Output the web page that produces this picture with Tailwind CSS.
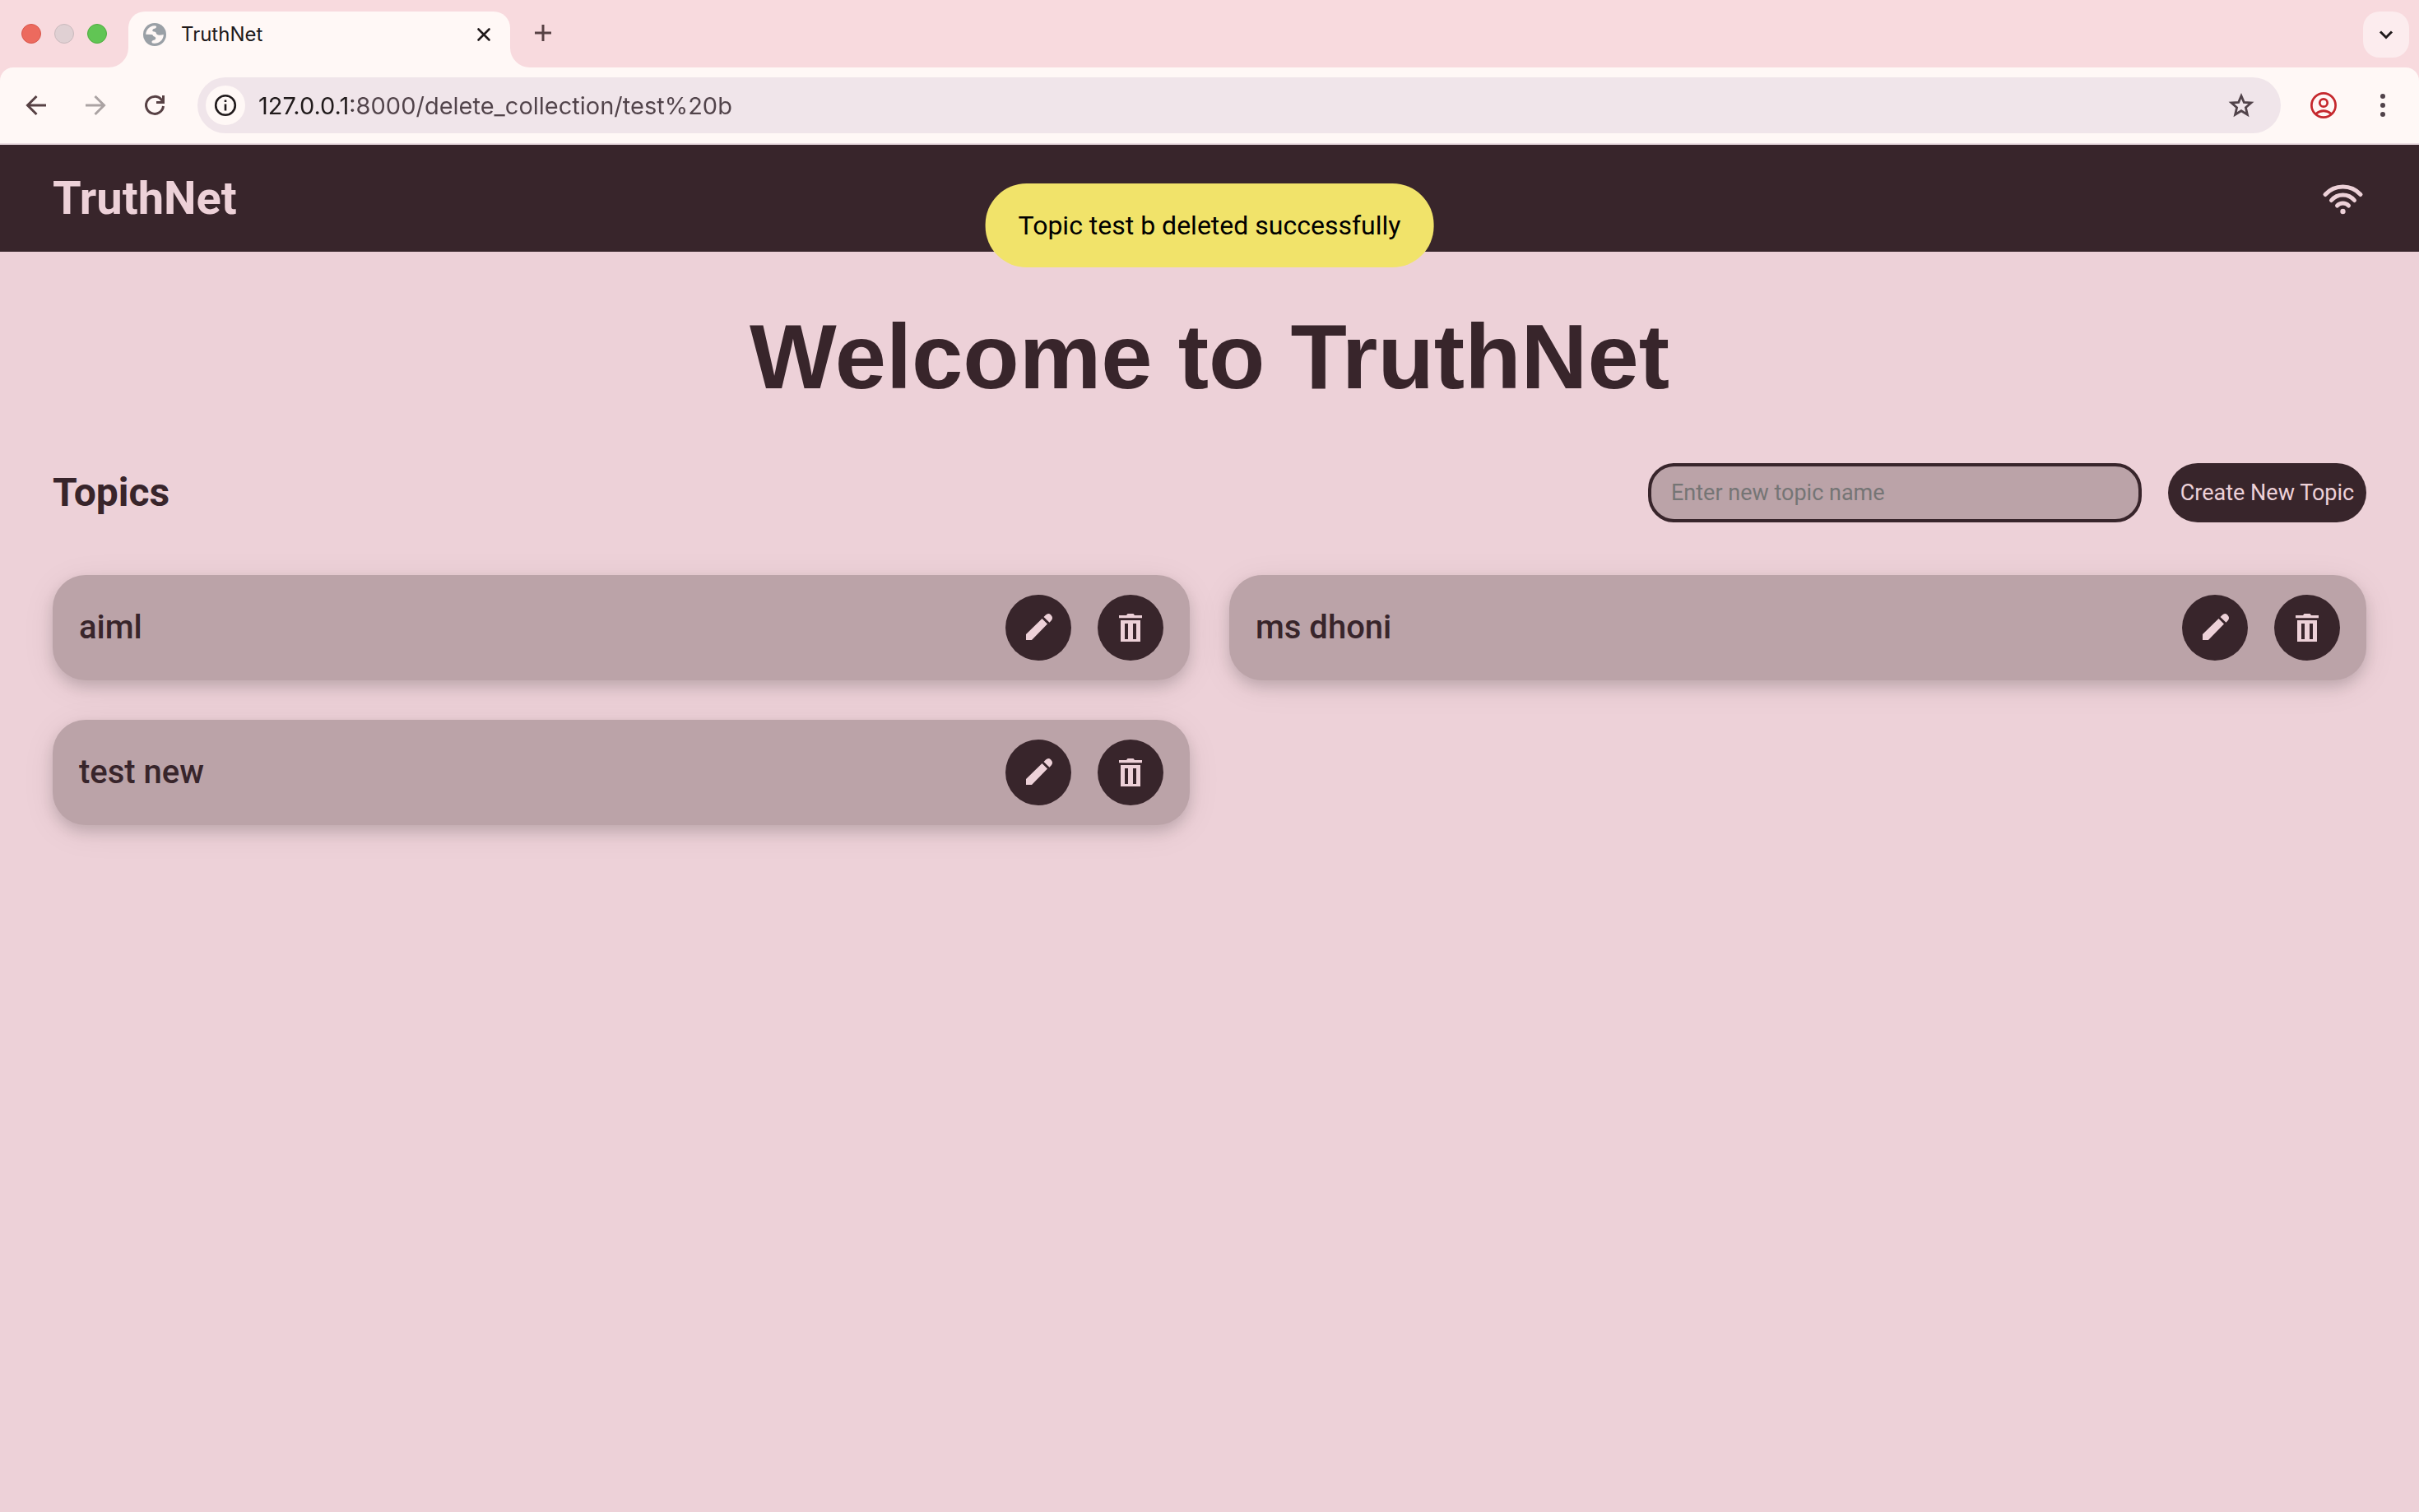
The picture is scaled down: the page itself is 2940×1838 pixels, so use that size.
<!DOCTYPE html>
<html lang="en">
<head>
<meta charset="utf-8">
<title>TruthNet</title>
<script src="https://cdn.jsdelivr.net/npm/@tailwindcss/browser@4"></script>
</head>
<body class="flex min-h-screen flex-col bg-[#edd1d8] font-['Roboto',sans-serif] text-[#38252b]">

<svg class="hidden" aria-hidden="true">
  <symbol id="pencil" viewBox="0 0 48 48">
    <path d="M9 39V32L28.500 13 35 19.500 16 39ZM30.500 11 33 8.500Q36 5.500 39 8.200 42.500 11.500 40 15L37.500 17.700Z"/>
  </symbol>
  <symbol id="trash" viewBox="0 0 48 48">
    <path fill-rule="evenodd" d="M10 9H19L20.500 7H27.500L29 9H38V12.300H10ZM12 15H36V41H12ZM17 19V38H21V19ZM27 19V38H31V19Z"/>
  </symbol>
</svg>

<div class="bg-[#f8dade] font-['Inter',sans-serif]">
  <div class="flex h-[82px] items-end">
    <div class="flex h-[82px] w-[132px] shrink-0 items-center gap-4 pl-[26px]">
      <button aria-label="Close window" class="size-6 rounded-full border border-[#d8574c] bg-[#ec6a5e]"></button>
      <button aria-label="Minimize window" class="size-6 rounded-full border border-[#c9babd] bg-[#e0d0d3]"></button>
      <button aria-label="Zoom window" class="size-6 rounded-full border border-[#50ad40] bg-[#61c554]"></button>
    </div>
    <svg class="size-6 shrink-0 text-[#fff8f6]" viewBox="0 0 24 24" fill="currentColor"><path d="M24 0V24H0A24 24 0 0 0 24 0Z"/></svg>
    <div class="flex h-[68px] w-[464px] items-start rounded-t-[20px] bg-[#fff8f6] pr-[20px] pl-[18px]">
      <div class="flex h-14 w-full items-center">
        <svg class="size-7" viewBox="0 0 28 28">
          <circle cx="14" cy="14" r="14" fill="#9aa0a6"/>
          <path d="M3.200 13.800C3.500 8 8 3.600 13.500 3.200 16 3.100 16.500 4 15.800 5.500 15 7 13 6.500 11.800 7.800 10.500 9.500 11.500 10.500 13.500 10.600 16 10.700 15.500 13 17 14 19 15.200 22 14.500 24.800 14 24.800 20.500 19.500 25 13.500 24.800 11 24.700 10.300 24 10.500 22.500 10.800 21 12.500 21 14 20.500 16 19.500 15.500 17 13.500 16.500 11.500 16 12.500 14.500 10.500 14Z" fill="#fff8f6"/>
        </svg>
        <span class="ml-[18px] flex-1 text-[24px] leading-8 text-[#201a1b]">TruthNet</span>
        <button aria-label="Close tab" class="flex size-6 items-center justify-center">
          <svg class="size-6" viewBox="0 0 24 24" fill="none" stroke="#201a1b" stroke-width="2.600" stroke-linecap="round"><path d="M5.500 5.500 18.500 18.500M18.500 5.500 5.500 18.500"/></svg>
        </button>
      </div>
    </div>
    <svg class="size-6 shrink-0 text-[#fff8f6]" viewBox="0 0 24 24" fill="currentColor"><path d="M0 0V24H24A24 24 0 0 1 0 0Z"/></svg>
    <button aria-label="New tab" class="mb-[30px] ml-1 flex size-6 items-center justify-center">
      <svg class="size-6" viewBox="0 0 24 24" fill="none" stroke="#574144" stroke-width="3"><path d="M12 2V22M2 12H22"/></svg>
    </button>
    <button aria-label="Search tabs" class="mr-3 mb-3 ml-auto flex size-14 items-center justify-center rounded-[20px] bg-[#fcecee]">
      <svg class="size-6" viewBox="0 0 24 24" fill="none" stroke="#201a1b" stroke-width="3"><path d="M5 8.500 12 15.500 19 8.500"/></svg>
    </button>
  </div>

  <div class="flex h-[92px] items-center rounded-t-2xl bg-[#fff8f6] px-7 text-[#574144]">
    <div class="flex w-[212px] shrink-0 gap-10">
      <button aria-label="Back"><svg class="size-8" viewBox="0 0 32 32" fill="none" stroke="currentColor" stroke-width="3"><path d="M28 16H6M16.500 5 5.500 16 16.500 27"/></svg></button>
      <button aria-label="Forward"><svg class="size-8" viewBox="0 0 32 32" fill="none" stroke="#aba3a3" stroke-width="3"><path d="M4 16H26M15.500 5 26.500 16 15.500 27"/></svg></button>
      <button aria-label="Reload"><svg class="size-8" viewBox="0 0 32 32" fill="none" stroke="currentColor" stroke-width="3"><path d="M26.500 17A10.500 10.500 0 1 1 24 9L26.500 12M26.500 4V12.500H18"/></svg></button>
    </div>
    <div class="flex h-[68px] flex-1 items-center rounded-full bg-[#f0e5ea] pr-8 pl-[10px]">
      <button aria-label="Site information" class="flex size-12 items-center justify-center rounded-full bg-[#fff8f6]">
        <svg class="size-7" viewBox="0 0 28 28" fill="none" stroke="#201a1b" stroke-width="2.600"><circle cx="14" cy="14" r="11.800"/><path d="M14 12.500V20.500M14 7.500V10"/></svg>
      </button>
      <input type="text" aria-label="Address" value="127.0.0.1:8000/delete_collection/test%20b" class="ml-4 h-12 flex-1 bg-[linear-gradient(90deg,#201a1b_114px,#51434a_114px)] bg-clip-text text-[29px] text-transparent outline-none">
      <button aria-label="Bookmark this page"><svg class="size-8" viewBox="0 0 32 32" fill="none" stroke="#51434a" stroke-width="2.800"><path d="M16 4.500 19.300 12.300 28 13 21.400 18.700 23.400 27.200 16 22.700 8.600 27.200 10.600 18.700 4 13 12.700 12.300Z"/></svg></button>
    </div>
    <button aria-label="Profile" class="ml-9"><svg class="size-8" viewBox="0 0 32 32" fill="none" stroke="#c5282d" stroke-width="2.700"><circle cx="16" cy="16" r="14.600"/><circle cx="16" cy="13" r="4.700"/><path d="M6.500 26.500Q16 19 25.500 26.500"/></svg></button>
    <button aria-label="Menu" class="ml-10"><svg class="size-8" viewBox="0 0 32 32" fill="#51434a"><circle cx="16" cy="5" r="3"/><circle cx="16" cy="16" r="3"/><circle cx="16" cy="27" r="3"/></svg></button>
  </div>
  <div class="h-[2px] bg-[#ecdde2]"></div>
</div>

<div class="relative flex-1">
  <header class="flex h-[130px] items-center justify-between bg-[#38252b] px-16 text-[#edd1d8]">
    <a href="#" class="text-[56px] leading-[64px] font-bold">TruthNet</a>
    <svg class="size-14" viewBox="0 0 56 56" fill="none" stroke="currentColor" stroke-width="5" stroke-linecap="round" role="img" aria-label="Online">
      <path d="M6 23.500A29 29 0 0 1 49 23.500M13.500 30.500A18.300 18.300 0 0 1 41.500 30.500M20.500 37A9.700 9.700 0 0 1 34.500 37"/>
      <circle cx="27.500" cy="44" r="3.200" fill="currentColor" stroke="none"/>
    </svg>
  </header>

  <div role="status" class="absolute top-[47px] left-1/2 -translate-x-1/2 rounded-[50px] bg-[#f1e36a] px-10 py-8 text-[32px] leading-[38px] whitespace-nowrap text-black">Topic test b deleted successfully</div>

  <main class="px-16">
    <h1 class="pt-16 pb-px text-center font-['Liberation_Sans',Arial,sans-serif] text-[112px] leading-[128px] font-bold">Welcome to TruthNet</h1>

    <div class="mt-16 flex items-center justify-between">
      <h2 class="text-[48px] leading-[56px] font-bold">Topics</h2>
      <form class="flex gap-8" onsubmit="return false">
        <input type="text" aria-label="New topic name" placeholder="Enter new topic name" class="h-[72px] w-[600px] rounded-[32px] border-4 border-[#38252b] bg-[#bba3a8] px-6 text-[27px] placeholder:text-[#757575]">
        <button class="h-[72px] w-[241px] rounded-[36px] bg-[#38252b] text-[27px] whitespace-nowrap text-[#edd1d8]">Create New Topic</button>
      </form>
    </div>

    <ul class="mt-16 grid grid-cols-2 gap-12">
      <li class="flex h-32 items-center gap-8 rounded-[40px] bg-[#bba3a8] px-8 shadow-[0_8px_16px_rgba(0,0,0,0.14),0_8px_40px_rgba(0,0,0,0.08)]">
        <a href="#" class="flex-1 text-[40px] leading-[48px] font-medium">aiml</a>
        <button aria-label="Edit aiml" class="flex size-20 items-center justify-center rounded-full bg-[#38252b]"><svg class="size-12 fill-[#edd1d8]"><use href="#pencil"/></svg></button>
        <button aria-label="Delete aiml" class="flex size-20 items-center justify-center rounded-full bg-[#38252b]"><svg class="size-12 fill-[#edd1d8]"><use href="#trash"/></svg></button>
      </li>
      <li class="flex h-32 items-center gap-8 rounded-[40px] bg-[#bba3a8] px-8 shadow-[0_8px_16px_rgba(0,0,0,0.14),0_8px_40px_rgba(0,0,0,0.08)]">
        <a href="#" class="flex-1 text-[40px] leading-[48px] font-medium">ms dhoni</a>
        <button aria-label="Edit ms dhoni" class="flex size-20 items-center justify-center rounded-full bg-[#38252b]"><svg class="size-12 fill-[#edd1d8]"><use href="#pencil"/></svg></button>
        <button aria-label="Delete ms dhoni" class="flex size-20 items-center justify-center rounded-full bg-[#38252b]"><svg class="size-12 fill-[#edd1d8]"><use href="#trash"/></svg></button>
      </li>
      <li class="flex h-32 items-center gap-8 rounded-[40px] bg-[#bba3a8] px-8 shadow-[0_8px_16px_rgba(0,0,0,0.14),0_8px_40px_rgba(0,0,0,0.08)]">
        <a href="#" class="flex-1 text-[40px] leading-[48px] font-medium">test new</a>
        <button aria-label="Edit test new" class="flex size-20 items-center justify-center rounded-full bg-[#38252b]"><svg class="size-12 fill-[#edd1d8]"><use href="#pencil"/></svg></button>
        <button aria-label="Delete test new" class="flex size-20 items-center justify-center rounded-full bg-[#38252b]"><svg class="size-12 fill-[#edd1d8]"><use href="#trash"/></svg></button>
      </li>
    </ul>
  </main>
</div>
</body>
</html>
